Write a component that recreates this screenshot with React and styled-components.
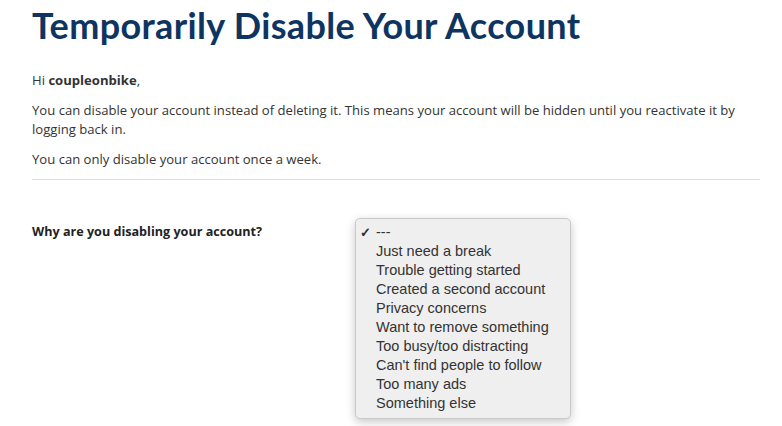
import styled, { createGlobalStyle } from "styled-components";

const GlobalStyle = createGlobalStyle`
  body {
    margin: 0;
    background: #fff;
    font-family: "Open Sans", "Liberation Sans", sans-serif;
    color: #333;
  }
`;

const Page = styled.div`
  width: 782px;
  height: 426px;
  overflow: hidden;
  padding: 0 22px 0 32px;
  box-sizing: border-box;
`;

const Title = styled.h1`
  margin: 0;
  padding-top: 3px;
  font-family: Lato, "Open Sans", sans-serif;
  font-size: 36px;
  line-height: 44px;
  font-weight: 700;
  letter-spacing: 0.35px;
  color: #0e3561;
`;

const Intro = styled.div`
  padding-top: 24px;
  display: flex;
  flex-direction: column;
  gap: 11px;
`;

const Para = styled.p`
  margin: 0;
  font-size: 13.1px;
  line-height: 19px;
  color: #333;
`;

const Divider = styled.hr`
  margin: 10px 0 0;
  border: 0;
  border-top: 1px solid #dcdcdc;
`;

const FormRow = styled.div`
  display: grid;
  grid-template-columns: 323px 1fr;
  padding-top: 38px;
`;

const Label = styled.label`
  font-size: 12.6px;
  font-weight: 700;
  color: #222;
  padding-top: 5px;
`;

const Menu = styled.ul`
  list-style: none;
  margin: 0;
  width: 216px;
  box-sizing: border-box;
  padding: 4px 0 5px;
  background: #efefef;
  border: 1px solid #c9c9c9;
  border-radius: 5px;
  box-shadow: 0 3px 10px rgba(0, 0, 0, 0.22);
  font-family: "Liberation Sans", Arial, sans-serif;
`;

const Option = styled.li`
  position: relative;
  padding-left: 20px;
  font-size: 14.5px;
  line-height: 19px;
  color: #333;
`;

const Check = styled.span`
  position: absolute;
  left: 4px;
  top: 0;
  font-size: 13px;
  font-weight: 700;
`;

const reasons = [
  "---",
  "Just need a break",
  "Trouble getting started",
  "Created a second account",
  "Privacy concerns",
  "Want to remove something",
  "Too busy/too distracting",
  "Can't find people to follow",
  "Too many ads",
  "Something else",
];

export default function App() {
  return (
    <Page>
      <GlobalStyle />
      <Title>Temporarily Disable Your Account</Title>
      <Intro>
        <Para>
          Hi <b>coupleonbike</b>,
        </Para>
        <Para>
          You can disable your account instead of deleting it. This means your account will be hidden until you
          reactivate it by logging back in.
        </Para>
        <Para>You can only disable your account once a week.</Para>
      </Intro>
      <Divider />
      <FormRow>
        <Label>Why are you disabling your account?</Label>
        <Menu>
          {reasons.map((r, i) => (
            <Option key={r}>
              {i === 0 && <Check>✓</Check>}
              {r}
            </Option>
          ))}
        </Menu>
      </FormRow>
    </Page>
  );
}
